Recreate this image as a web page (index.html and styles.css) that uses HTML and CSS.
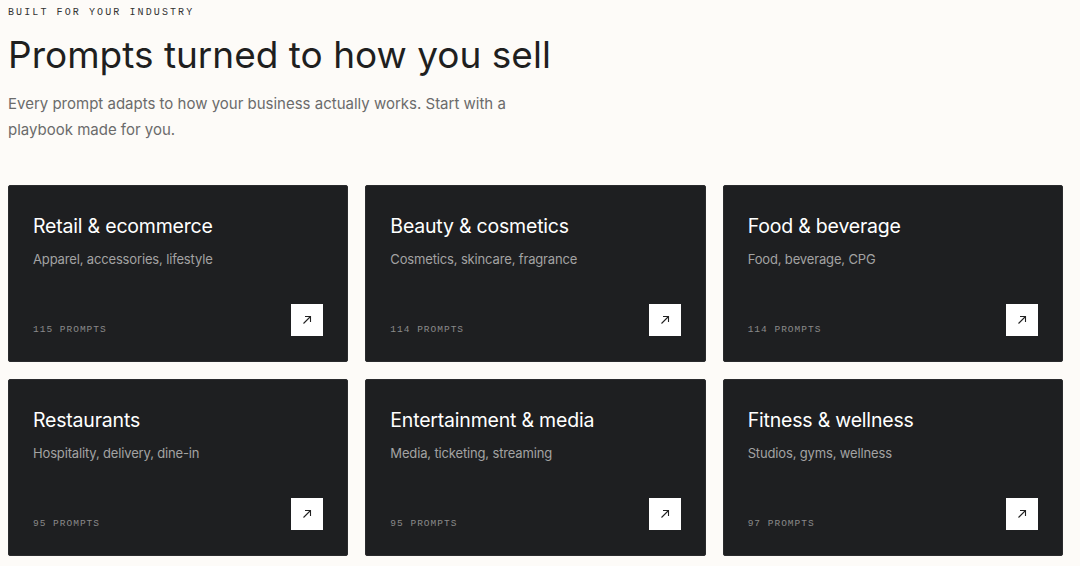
FILE: index.html
```html
<!DOCTYPE html>
<html lang="en">
<head>
    <meta charset="UTF-8">
    <meta name="viewport" content="width=device-width, initial-scale=1.0">
    <title>Built for your industry</title>
    <link rel="stylesheet" href="styles.css">
</head>
<body>
    <section class="industries">
        <div class="eyebrow">BUILT FOR YOUR INDUSTRY</div>
        <h1>Prompts turned to how you sell</h1>
        <p class="lead">Every prompt adapts to how your business actually works. Start with a playbook made for you.</p>

        <div class="grid">
            <a class="card" href="#">
                <h2>Retail &amp; ecommerce</h2>
                <p>Apparel, accessories, lifestyle</p>
                <div class="card-foot">
                    <span class="count">115 PROMPTS</span>
                    <span class="go"><svg viewBox="0 0 12 12" width="12" height="12"><path d="M2.5 9.5L9.5 2.5M4 2.5h5.5V8" fill="none" stroke="#222" stroke-width="1.1"/></svg></span>
                </div>
            </a>
            <a class="card" href="#">
                <h2>Beauty &amp; cosmetics</h2>
                <p>Cosmetics, skincare, fragrance</p>
                <div class="card-foot">
                    <span class="count">114 PROMPTS</span>
                    <span class="go"><svg viewBox="0 0 12 12" width="12" height="12"><path d="M2.5 9.5L9.5 2.5M4 2.5h5.5V8" fill="none" stroke="#222" stroke-width="1.1"/></svg></span>
                </div>
            </a>
            <a class="card" href="#">
                <h2>Food &amp; beverage</h2>
                <p>Food, beverage, CPG</p>
                <div class="card-foot">
                    <span class="count">114 PROMPTS</span>
                    <span class="go"><svg viewBox="0 0 12 12" width="12" height="12"><path d="M2.5 9.5L9.5 2.5M4 2.5h5.5V8" fill="none" stroke="#222" stroke-width="1.1"/></svg></span>
                </div>
            </a>
            <a class="card" href="#">
                <h2>Restaurants</h2>
                <p>Hospitality, delivery, dine-in</p>
                <div class="card-foot">
                    <span class="count">95 PROMPTS</span>
                    <span class="go"><svg viewBox="0 0 12 12" width="12" height="12"><path d="M2.5 9.5L9.5 2.5M4 2.5h5.5V8" fill="none" stroke="#222" stroke-width="1.1"/></svg></span>
                </div>
            </a>
            <a class="card" href="#">
                <h2>Entertainment &amp; media</h2>
                <p>Media, ticketing, streaming</p>
                <div class="card-foot">
                    <span class="count">95 PROMPTS</span>
                    <span class="go"><svg viewBox="0 0 12 12" width="12" height="12"><path d="M2.5 9.5L9.5 2.5M4 2.5h5.5V8" fill="none" stroke="#222" stroke-width="1.1"/></svg></span>
                </div>
            </a>
            <a class="card" href="#">
                <h2>Fitness &amp; wellness</h2>
                <p>Studios, gyms, wellness</p>
                <div class="card-foot">
                    <span class="count">97 PROMPTS</span>
                    <span class="go"><svg viewBox="0 0 12 12" width="12" height="12"><path d="M2.5 9.5L9.5 2.5M4 2.5h5.5V8" fill="none" stroke="#222" stroke-width="1.1"/></svg></span>
                </div>
            </a>
        </div>
    </section>
</body>
</html>
```

FILE: styles.css
```css
body {
    margin: 0;
    padding: 0;
    background-color: #fdfbf8;
    font-family: Inter, "Noto Sans", sans-serif;
    color: #1f1f1f;
}
.industries {
    width: 1055px;
    padding: 6px 8px 0;
}
.eyebrow {
    font-family: "Liberation Mono", monospace;
    font-size: 10px;
    letter-spacing: 2.1px;
    color: #333;
    line-height: 14px;
}
h1 {
    margin: 13px 0 0;
    font-size: 37px;
    font-weight: 400;
    letter-spacing: 0;
    line-height: 44px;
    color: #1f1f1f;
}
.lead {
    margin: 14px 0 0;
    width: 520px;
    font-size: 15px;
    line-height: 26px;
    color: #6b6b6b;
}
.grid {
    display: grid;
    grid-template-columns: repeat(3, 1fr);
    gap: 17px;
    margin-top: 42px;
}
.card {
    display: flex;
    flex-direction: column;
    height: 177px;
    box-sizing: border-box;
    padding: 28px 25px 25px;
    background-color: #1e1f21;
    border: 1px solid #2a2b2d;
    border-radius: 2px;
    text-decoration: none;
}
.card h2 {
    margin: -1px 0 0 -1px;
    font-size: 19.5px;
    font-weight: 400;
    line-height: 26px;
    letter-spacing: -0.2px;
    color: #fff;
}
.card p {
    margin: 10px 0 0 -1px;
    font-size: 13px;
    line-height: 20px;
    letter-spacing: -0.15px;
    color: #a3a3a3;
}
.card-foot {
    margin: auto -1px 0 -1px;
    display: flex;
    justify-content: space-between;
    align-items: flex-end;
}
.count {
    font-family: "Liberation Mono", monospace;
    font-size: 9.5px;
    letter-spacing: 1px;
    color: #8a8a8a;
    line-height: 12px;
    margin-bottom: 0;
}
.go {
    width: 32px;
    height: 32px;
    background-color: #fff;
    display: flex;
    align-items: center;
    justify-content: center;
}
```
